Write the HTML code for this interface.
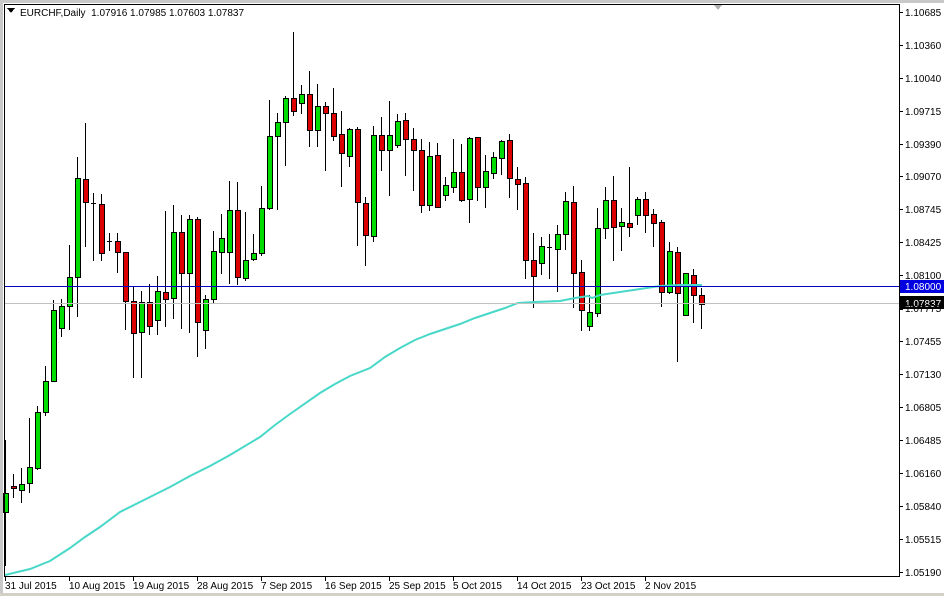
<!DOCTYPE html>
<html><head><meta charset="utf-8"><style>
html,body{margin:0;padding:0;background:#fff;}
body{width:944px;height:596px;overflow:hidden;position:relative;font-family:"Liberation Sans",sans-serif;}
svg text{font-family:"Liberation Sans",sans-serif;font-size:10px;fill:#000;}
</style></head><body>
<svg id="s" width="944" height="596" viewBox="0 0 944 596" xmlns="http://www.w3.org/2000/svg" shape-rendering="crispEdges">
<rect x="0" y="0" width="944" height="596" fill="#fff"/>
<rect x="0" y="0" width="944" height="3" fill="#c8c8c8"/>
<rect x="0" y="0" width="3" height="596" fill="#c8c8c8"/>
<rect x="0" y="593" width="944" height="3" fill="#d4d0c8"/>
<g id="c"></g>
<polyline fill="none" stroke="#48d8c8" stroke-width="2" shape-rendering="auto" points="5,575 30,569 50,561 70,548 85,537 100,527 120,512 150,497 170,487 190,476 210,466 230,455 260,437 275,425 290,414 320,393 335,384 350,376 370,368 385,357 400,348 415,340 430,334 460,324 475,318 490,313 505,308 518,303 535,302 560,301 575,298 588,296 592,298 600,295 620,292 640,289 660,286 680,285 702,285"/>
<line x1="4" y1="286.5" x2="899" y2="286.5" stroke="#0000c8" stroke-width="1"/>
<line x1="4" y1="303.5" x2="899" y2="303.5" stroke="#c0c0c0" stroke-width="1"/>
<rect x="4.5" y="4.5" width="895" height="572" fill="none" stroke="#000"/>
<polygon points="7,8 15,8 11,13" fill="#000"/>
<text x="20" y="16">EURCHF,Daily&#160; 1.07916 1.07985 1.07603 1.07837</text>
<polygon points="714,5 722,5 718,10" fill="#b0b0b0"/>
<g id="y"></g>
<g id="x"></g>
<rect x="900" y="280" width="44" height="13" fill="#0000e0"/>
<text x="905" y="290" style="fill:#fff">1.08000</text>
<rect x="900" y="296" width="44" height="13" fill="#000"/>
<text x="905" y="307" style="fill:#fff">1.07837</text>
<text x="905" y="16">1.10685</text>
<text x="905" y="49">1.10360</text>
<text x="905" y="82">1.10040</text>
<text x="905" y="115">1.09715</text>
<text x="905" y="148">1.09390</text>
<text x="905" y="180">1.09070</text>
<text x="905" y="213">1.08745</text>
<text x="905" y="246">1.08425</text>
<text x="905" y="279">1.08100</text>
<text x="905" y="312">1.07775</text>
<text x="905" y="345">1.07455</text>
<text x="905" y="378">1.07130</text>
<text x="905" y="411">1.06805</text>
<text x="905" y="444">1.06485</text>
<text x="905" y="477">1.06160</text>
<text x="905" y="510">1.05840</text>
<text x="905" y="543">1.05515</text>
<text x="905" y="576">1.05190</text>
<text x="5" y="589">31 Jul 2015</text>
<text x="69" y="589">10 Aug 2015</text>
<text x="133" y="589">19 Aug 2015</text>
<text x="197" y="589">28 Aug 2015</text>
<text x="261" y="589">7 Sep 2015</text>
<text x="325" y="589">16 Sep 2015</text>
<text x="389" y="589">25 Sep 2015</text>
<text x="453" y="589">5 Oct 2015</text>
<text x="517" y="589">14 Oct 2015</text>
<text x="581" y="589">23 Oct 2015</text>
<text x="645" y="589">2 Nov 2015</text>
</svg>
<script>
var d=[
[5,'g',440,493,512,565],[13,'r',474,486,488,497],[21,'g',468,484,490,502],[29,'g',418,467,483,492],[37,'g',406,412,468,469],
[45,'g',366,381,412,415],[53,'g',300,310,381,381],[61,'g',299,306,328,336],[69,'g',245,277,306,329],[77,'g',157,178,277,316],
[85,'r',123,179,202,246],[93,'d',193,203,203,260],[101,'r',194,204,253,260],[109,'d',233,241,241,250],[117,'r',233,241,252,272],
[125,'r',252,252,301,329],[133,'r',287,301,333,377],[141,'g',291,302,332,377],[149,'r',284,302,326,334],[157,'g',276,291,320,334],
[165,'r',211,292,299,326],[173,'g',205,232,298,318],[181,'r',215,232,273,328],[189,'g',215,219,273,332],[197,'r',217,219,322,356],
[205,'g',295,299,330,348],[213,'g',231,251,299,302],[221,'g',214,238,252,273],[229,'g',181,210,252,283],[237,'r',182,210,277,284],
[245,'g',212,260,278,280],[253,'g',234,253,259,260],[261,'g',186,208,253,255],[269,'g',100,136,208,209],[277,'g',113,122,136,209],
[285,'g',96,98,122,165],[293,'r',32,98,111,115],[301,'g',85,94,103,113],[309,'r',71,94,130,146],[317,'g',84,106,130,146],
[325,'r',102,106,113,170],[333,'r',88,113,136,140],[341,'r',111,134,153,186],[349,'g',128,129,156,166],[357,'r',127,129,202,245],
[365,'r',197,203,235,265],[373,'g',126,135,236,241],[381,'r',117,135,150,170],[389,'g',101,135,150,195],[397,'g',114,121,145,147],
[405,'r',113,120,139,175],[413,'r',128,139,150,190],[421,'r',139,150,205,212],[429,'g',142,156,205,210],[437,'r',143,155,207,207],
[445,'g',177,185,195,200],[453,'g',139,172,187,192],[461,'r',144,172,200,201],[469,'g',137,138,199,222],[477,'r',137,137,187,200],
[485,'g',155,171,187,207],[493,'g',152,157,173,178],[501,'g',140,141,158,174],[509,'r',134,140,178,197],[517,'r',167,179,184,209],
[525,'r',177,183,260,278],[533,'r',233,260,276,307],[541,'g',237,246,263,274],[549,'d',234,247,247,278],[557,'g',225,234,249,291],
[565,'g',192,201,234,249],[573,'r',186,202,273,307],[581,'r',260,272,310,330],[589,'g',295,312,326,330],[597,'g',208,228,313,316],
[605,'g',187,200,228,238],[613,'r',176,200,227,260],[621,'g',208,222,226,250],[629,'r',167,223,227,236],[637,'g',197,199,215,224],
[645,'r',192,199,215,232],[653,'r',209,214,223,246],[661,'r',220,222,292,306],[669,'g',242,251,292,293],[677,'r',247,252,293,361],
[685,'g',273,273,315,315],[693,'r',269,275,295,322],[701,'r',288,295,304,328]];
var h='';
d.forEach(function(c){var x=c[0],t=c[1];
h+='<line x1="'+(x+.5)+'" y1="'+c[2]+'" x2="'+(x+.5)+'" y2="'+(c[5]+1)+'" stroke="#000"/>';
if(t=='d'){h+='<line x1="'+(x-2)+'" y1="'+(c[3]+.5)+'" x2="'+(x+3)+'" y2="'+(c[3]+.5)+'" stroke="#000"/>';}
else{var f=t=='g'?'#00dc00':'#dc0000';h+='<rect x="'+(x-2+.5)+'" y="'+(c[3]+.5)+'" width="5" height="'+Math.max(2,c[4]-c[3])+'" fill="'+f+'" stroke="#000"/>';}
});
document.getElementById('c').innerHTML=h;
var t='';[12,45,78,111,144,176,209,242,275,309,341,374,407,440,473,506,539,572].forEach(function(y){t+='<line x1="899" y1="'+(y+.5)+'" x2="903" y2="'+(y+.5)+'" stroke="#000"/>';});
document.getElementById('y').innerHTML=t;
t='';[5,69,133,197,261,325,389,453,517,581,645].forEach(function(x){t+='<line x1="'+(x+.5)+'" y1="577" x2="'+(x+.5)+'" y2="581" stroke="#000"/>';});
document.getElementById('x').innerHTML=t;
</script>
</body></html>
